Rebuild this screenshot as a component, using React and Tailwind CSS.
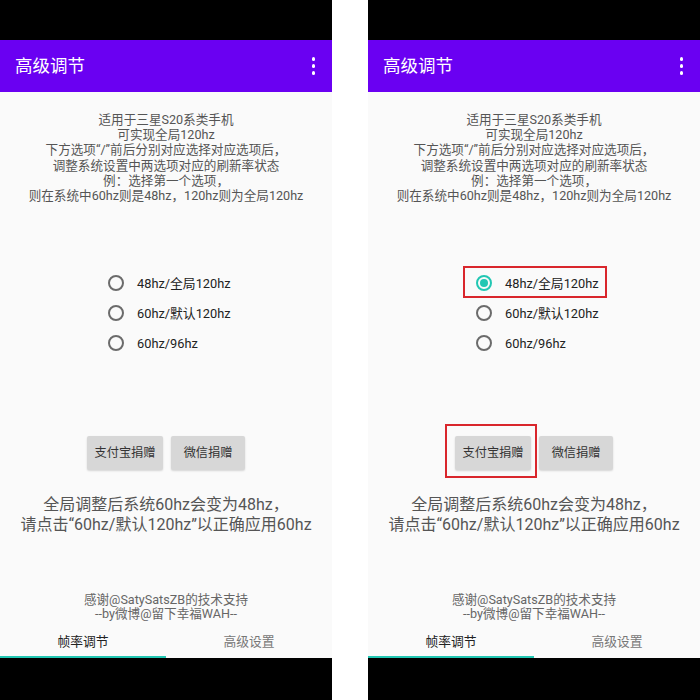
import React from 'react';

const options = ['48hz/全局120hz', '60hz/默认120hz', '60hz/96hz'];

const intro = [
  '适用于三星S20系类手机',
  '可实现全局120hz',
  '下方选项“/”前后分别对应选择对应选项后，',
  '调整系统设置中两选项对应的刷新率状态',
  '例：选择第一个选项，',
  '则在系统中60hz则是48hz，120hz则为全局120hz',
];

function Radio({ checked }) {
  return (
    <span
      className={`w-[16px] h-[16px] rounded-full border-2 flex items-center justify-center shrink-0 ${
        checked ? 'border-[#22c7b3]' : 'border-[#6b6b6b]'
      }`}
    >
      {checked && <span className="w-[8px] h-[8px] rounded-full bg-[#22c7b3]" />}
    </span>
  );
}

function Phone({ annotated }) {
  return (
    <div className="w-[332px] h-[700px] flex flex-col font-[Roboto,'Noto_Sans_CJK_SC',sans-serif]">
      {/* status bar */}
      <div className="h-[40px] bg-black" />

      {/* toolbar */}
      <div className="h-[52px] bg-[#6a00f2] flex items-center justify-between pl-[15px] pr-[17px]">
        <h1 className="text-[17.5px] text-white leading-none pt-[2px]">高级调节</h1>
        <div className="flex flex-col gap-[3.5px]">
          <span className="w-[3.5px] h-[3.5px] rounded-full bg-white" />
          <span className="w-[3.5px] h-[3.5px] rounded-full bg-white" />
          <span className="w-[3.5px] h-[3.5px] rounded-full bg-white" />
        </div>
      </div>

      {/* content */}
      <div className="h-[566px] bg-[#fafafa] flex flex-col relative">
        <div className="pt-[20px] text-center text-[12.6px] leading-[15.2px] text-[#555]">
          {intro.map((line) => (
            <p key={line}>{line}</p>
          ))}
        </div>

        <div className="mt-[65px] ml-[108px] flex flex-col">
          {options.map((opt, i) => (
            <div key={opt} className="h-[30px] flex items-center gap-[13px]">
              <Radio checked={annotated && i === 0} />
              <span className="text-[12.8px] text-[#222]">{opt}</span>
            </div>
          ))}
        </div>

        <div className="mt-[78px] flex justify-center gap-[8px]">
          <button className="w-[76px] h-[34px] rounded-[2px] bg-[#d7d7d7] shadow-[0_1px_2px_rgba(0,0,0,0.15)] text-[12.2px] text-[#333]">
            支付宝捐赠
          </button>
          <button className="w-[74px] h-[34px] rounded-[2px] bg-[#d7d7d7] shadow-[0_1px_2px_rgba(0,0,0,0.15)] text-[12.2px] text-[#333]">
            微信捐赠
          </button>
        </div>

        <div className="mt-[25px] text-center text-[16px] leading-[19.5px] text-[#555]">
          <p>全局调整后系统60hz会变为48hz，</p>
          <p>请点击“60hz/默认120hz”以正确应用60hz</p>
        </div>

        <div className="mt-[59px] text-center text-[12.6px] leading-[14px] text-[#666]">
          <p>感谢@SatySatsZB的技术支持</p>
          <p>--by微博@留下幸福WAH--</p>
        </div>

        <div className="mt-[5px] h-[30px] flex">
          <div className="flex-1 flex items-center justify-center text-[12.8px] text-[#222]">帧率调节</div>
          <div className="flex-1 flex items-center justify-center text-[12.8px] text-[#777]">高级设置</div>
        </div>
        <div className="h-[2px] w-[166px] bg-[#22c7b3]" />

        {annotated && (
          <>
            <div className="absolute left-[95px] top-[174px] w-[144px] h-[32px] border-2 border-[#d9262c]" />
            <div className="absolute left-[77px] top-[332px] w-[92px] h-[54px] border-2 border-[#d9262c]" />
          </>
        )}
      </div>

      {/* nav bar */}
      <div className="flex-1 bg-black" />
    </div>
  );
}

export default function App() {
  return (
    <div className="w-[700px] h-[700px] bg-white flex justify-between overflow-hidden">
      <Phone />
      <Phone annotated />
    </div>
  );
}
